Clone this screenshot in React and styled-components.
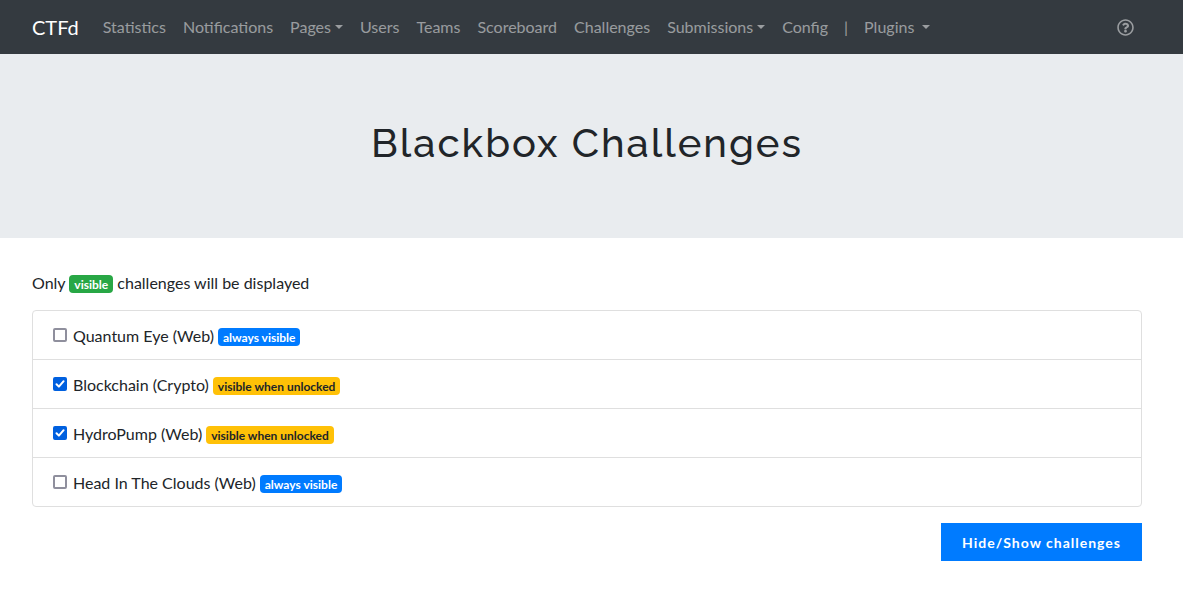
import React from "react";
import styled, { createGlobalStyle } from "styled-components";
import { FaRegQuestionCircle } from "react-icons/fa";

const GlobalStyle = createGlobalStyle`
  *, *::before, *::after { box-sizing: border-box; }
  body {
    margin: 0;
    background: #fff;
    color: #212529;
    font-family: Lato, "Liberation Sans", sans-serif;
    font-size: 16px;
    line-height: 24px;
  }
`;

const Band = styled.div`
  padding-right: 9px;
`;

const Container = styled.div`
  max-width: 1140px;
  margin: 0 auto;
  padding: 0 15px;
`;

const NavBand = styled(Band).attrs({ as: "nav" })`
  background: #343a40;
`;

const NavRow = styled(Container)`
  display: flex;
  align-items: center;
  height: 54px;
`;

const Brand = styled.a`
  margin-right: 16px;
  color: #fff;
  font-size: 20px;
  line-height: 30px;
  text-decoration: none;
`;

const NavList = styled.ul`
  display: flex;
  flex: 1;
  gap: 17px;
  margin: 0;
  padding: 0 8px;
  list-style: none;
`;

const NavItem = styled.li`
  color: rgba(255, 255, 255, 0.5);
  white-space: pre;
`;

const Divider = styled(NavItem)`
  margin: 0 -1px;
`;

const NavLink = styled.a`
  color: rgba(255, 255, 255, 0.5);
  text-decoration: none;

  &:hover {
    color: rgba(255, 255, 255, 0.75);
  }
`;

const Caret = styled.span`
  display: inline-block;
  margin-left: 4px;
  vertical-align: 4px;
  border-top: 4px solid;
  border-right: 4px solid transparent;
  border-left: 4px solid transparent;
`;

const HelpLink = styled(NavLink)`
  display: flex;
  padding: 0 8px;
`;

const Hero = styled(Band).attrs({ as: "header" })`
  padding-top: 65px;
  padding-bottom: 63px;
  background: #e9ecef;
`;

const Title = styled.h1`
  margin: 0 0 8px;
  font-family: Raleway, Inter, sans-serif;
  font-size: 40px;
  font-weight: 500;
  line-height: 48px;
  letter-spacing: 2px;
  text-align: center;
`;

const Main = styled(Band).attrs({ as: "main" })`
  padding-top: 33px;
  padding-bottom: 48px;
`;

const Intro = styled.p`
  margin: 0 0 15px;
`;

const tones = {
  success: ["#28a745", "#fff"],
  primary: ["#007bff", "#fff"],
  warning: ["#ffc107", "#212529"],
};

const Badge = styled.span`
  display: inline-block;
  padding: 4px 5px 2px;
  border-radius: 4px;
  background: ${({ $tone }) => tones[$tone][0]};
  color: ${({ $tone }) => tones[$tone][1]};
  font-size: 12px;
  font-weight: 700;
  line-height: 12px;
  white-space: nowrap;
  vertical-align: baseline;
`;

const List = styled.ul`
  margin: 0 0 16px;
  padding: 0;
  border: 1px solid #dfdfdf;
  border-radius: 4px;
  list-style: none;
`;

const Row = styled.li`
  display: flex;
  align-items: baseline;
  gap: 4px;
  padding: 13px 20px 11px;

  & + & {
    border-top: 1px solid #dfdfdf;
  }
`;

const CheckLabel = styled.label`
  display: flex;
  align-items: baseline;
  gap: 6px;
`;

const CheckBox = styled.span`
  display: grid;
  align-self: center;
  margin-bottom: 2px;

  & > * {
    grid-area: 1 / 1;
  }
`;

const CheckInput = styled.input`
  width: 14px;
  height: 14px;
  margin: 0;
  appearance: none;
  border: 2px solid #8f8f9d;
  border-radius: 2px;
  background: #fff;

  &:checked {
    border-color: #0060df;
    background: #0060df;
  }

  & + svg {
    visibility: hidden;
    pointer-events: none;
  }

  &:checked + svg {
    visibility: visible;
  }
`;

const Actions = styled.div`
  display: flex;
  justify-content: flex-end;
`;

const Button = styled.button`
  padding: 9px 20px 7px;
  border: 1px solid #007bff;
  border-radius: 0;
  background: #007bff;
  color: #fff;
  font-family: inherit;
  font-size: 14px;
  font-weight: 700;
  line-height: 20px;
  letter-spacing: 1px;
  cursor: pointer;
`;

const links = [
  { text: "Statistics" },
  { text: "Notifications" },
  { text: "Pages", menu: true },
  { text: "Users" },
  { text: "Teams" },
  { text: "Scoreboard" },
  { text: "Challenges" },
  { text: "Submissions", menu: true },
  { text: "Config" },
  { text: "|", divider: true },
  { text: "Plugins ", menu: true },
];

const challenges = [
  { name: "Quantum Eye", category: "Web", hidden: false },
  { name: "Blockchain", category: "Crypto", hidden: true },
  { name: "HydroPump", category: "Web", hidden: true },
  { name: "Head In The Clouds", category: "Web", hidden: false },
];

function Challenge({ name, category, hidden }) {
  return (
    <Row>
      <CheckLabel>
        <CheckBox>
          <CheckInput type="checkbox" defaultChecked={hidden} />
          <svg width="14" height="14" viewBox="0 0 14 14" fill="none" aria-hidden="true">
            <path
              d="M3.5 7.2 5.9 9.6 10.6 4.2"
              stroke="#fff"
              strokeWidth="2"
              strokeLinecap="round"
              strokeLinejoin="round"
            />
          </svg>
        </CheckBox>
        <span>
          {name} ({category})
        </span>
      </CheckLabel>
      <Badge $tone={hidden ? "warning" : "primary"}>
        {hidden ? "visible when unlocked" : "always visible"}
      </Badge>
    </Row>
  );
}

export default function App() {
  return (
    <>
      <GlobalStyle />
      <NavBand>
        <NavRow>
          <Brand href="#">CTFd</Brand>
          <NavList>
            {links.map(({ text, menu, divider }) =>
              divider ? (
                <Divider key={text}>{text}</Divider>
              ) : (
                <NavItem key={text}>
                  <NavLink href="#">
                    {text}
                    {menu && <Caret />}
                  </NavLink>
                </NavItem>
              )
            )}
          </NavList>
          <HelpLink href="#" aria-label="Help">
            <FaRegQuestionCircle size={17} />
          </HelpLink>
        </NavRow>
      </NavBand>
      <Hero>
        <Container>
          <Title>Blackbox Challenges</Title>
        </Container>
      </Hero>
      <Main>
        <Container>
          <Intro>
            Only <Badge $tone="success">visible</Badge> challenges will be displayed
          </Intro>
          <List>
            {challenges.map((c) => (
              <Challenge key={c.name} {...c} />
            ))}
          </List>
          <Actions>
            <Button type="button">Hide/Show challenges</Button>
          </Actions>
        </Container>
      </Main>
    </>
  );
}
